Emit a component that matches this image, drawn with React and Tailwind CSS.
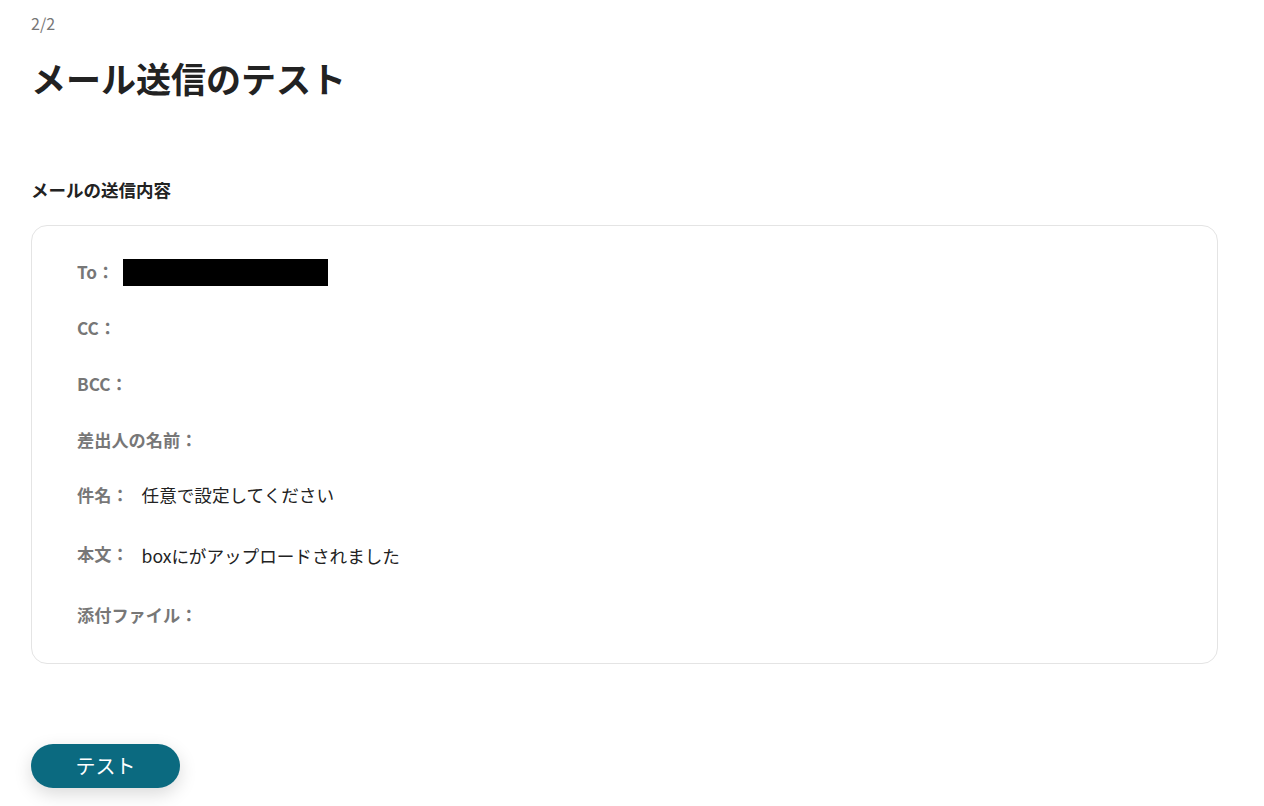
import React from "react";

const font = { fontFamily: '"Noto Sans CJK JP", "Noto Sans", sans-serif' };

function Row({ label, children, className = "" }) {
  return (
    <div className={"flex items-center h-[28px] " + className}>
      <span className="text-[17.2px] font-bold text-[#777777] leading-[28px] whitespace-nowrap">{label}</span>
      {children}
    </div>
  );
}

export default function App() {
  return (
    <div className="min-h-[806px] bg-white pl-[31px] pr-[46px] pt-[10px]" style={font}>
      <div className="text-[16px] leading-[26px] text-[#777777]">2/2</div>
      <h1 className="mt-[20px] text-[35px] leading-[44px] font-bold text-[#222222]">メール送信のテスト</h1>
      <h2 className="mt-[78px] text-[17.5px] leading-[24px] font-bold text-[#222222]">メールの送信内容</h2>
      <div className="mt-[23px] border border-[#e4e4e4] rounded-[16px] h-[439px] pl-[45px] pt-[32px]">
        <div className="flex flex-col">
          <Row label="To：">
            <div className="ml-[9px] w-[205px] h-[27px] bg-black" />
          </Row>
          <Row label="CC：" className="mt-[28px]" />
          <Row label="BCC：" className="mt-[28px]" />
          <Row label="差出人の名前：" className="mt-[28px]" />
          <Row label="件名：" className="mt-[27px]">
            <span className="ml-[13px] text-[17.6px] text-[#222222]">任意で設定してください</span>
          </Row>
          <Row label="本文：" className="mt-[31px] items-start">
            <span className="ml-[13px] text-[17.6px] text-[#222222] mt-[3px]">boxにがアップロードされました</span>
          </Row>
          <Row label="添付ファイル：" className="mt-[33px]" />
        </div>
      </div>
      <button className="mt-[80px] w-[149px] h-[44px] rounded-full bg-[#0b6a80] text-white text-[20px] shadow-[0_6px_18px_rgba(0,0,0,0.15)]">
        テスト
      </button>
    </div>
  );
}
